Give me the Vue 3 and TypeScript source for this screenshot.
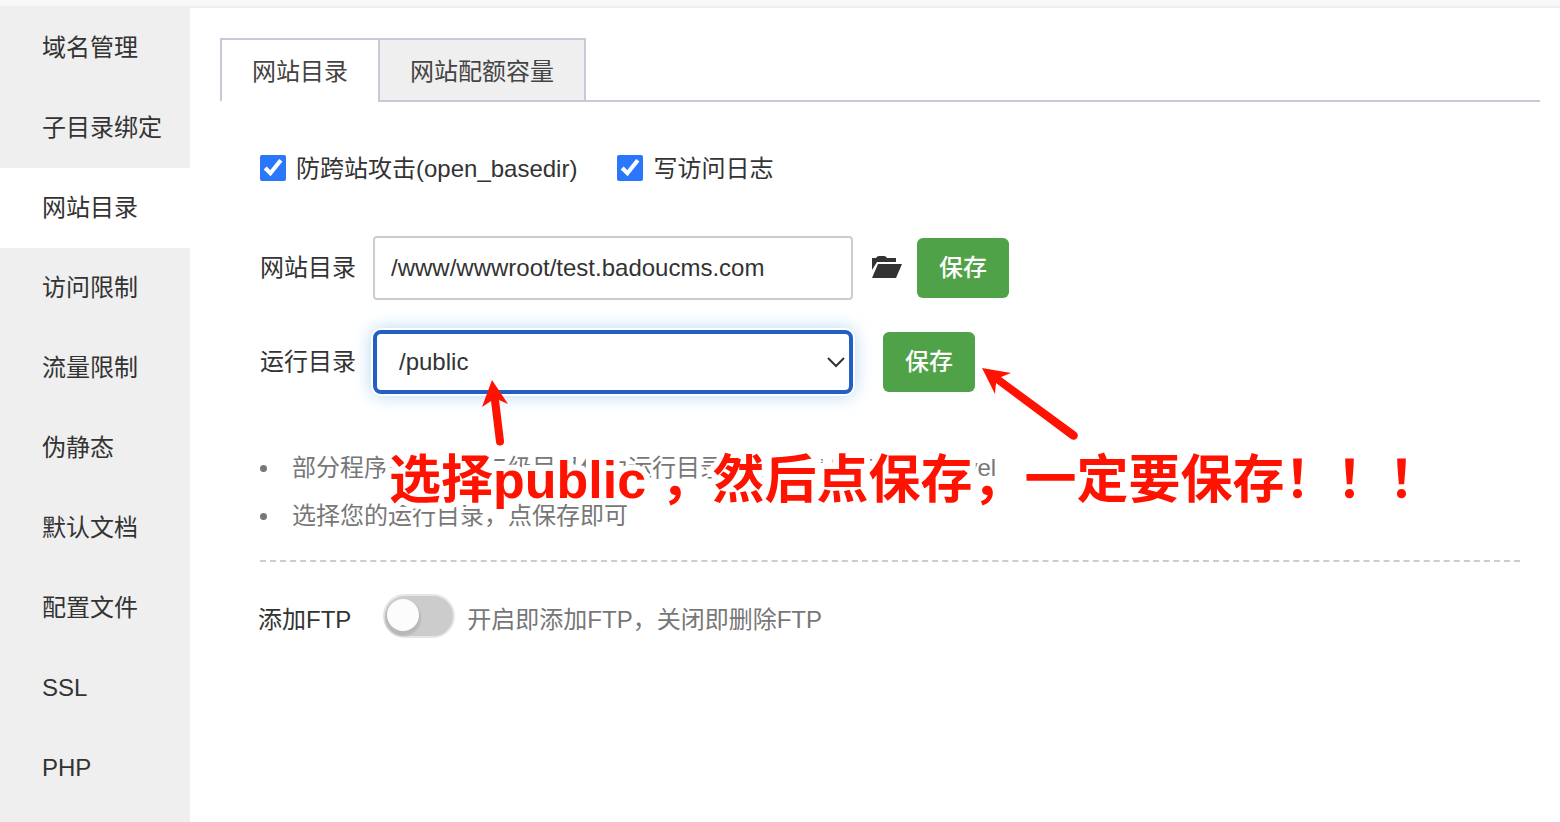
<script setup lang="ts">
import { ref } from 'vue'

const menu = ['域名管理', '子目录绑定', '网站目录', '访问限制', '流量限制', '伪静态', '默认文档', '配置文件', 'SSL', 'PHP']
const activeMenu = ref('网站目录')
const tabs = ['网站目录', '网站配额容量']
const activeTab = ref('网站目录')
const antiCross = ref(true)
const accessLog = ref(true)
const sitePath = ref('/www/wwwroot/test.badoucms.com')
const runPath = ref('/public')
const ftp = ref(false)
</script>

<template>
  <div class="page">
    <header class="topbar"></header>
    <div class="body">
      <nav class="sidebar">
        <button
          v-for="item in menu"
          :key="item"
          type="button"
          class="menu-item"
          :class="{ active: item === activeMenu }"
          @click="activeMenu = item"
        >{{ item }}</button>
      </nav>

      <main class="main">
        <div class="tabs">
          <button
            v-for="tab in tabs"
            :key="tab"
            type="button"
            class="tab"
            :class="{ active: tab === activeTab }"
            @click="activeTab = tab"
          >{{ tab }}</button>
          <span class="tab-fill"></span>
        </div>

        <section class="panel">
          <div class="checks">
            <label class="check"><input v-model="antiCross" type="checkbox" /><span>防跨站攻击(open_basedir)</span></label>
            <label class="check"><input v-model="accessLog" type="checkbox" /><span>写访问日志</span></label>
          </div>

          <div class="row">
            <label class="row-label" for="site-path">网站目录</label>
            <input id="site-path" v-model="sitePath" class="field" type="text" />
            <button type="button" class="folder" aria-label="选择目录">
              <svg width="32" height="24" viewBox="0 0 32 24">
                <path d="M1 14V2H5Q6 0 8 0H13Q15 0 16 2H25V6H6L1 14Z" fill="#333" />
                <path d="M7 8H31L25 22H1Z" fill="#333" />
              </svg>
            </button>
            <button type="button" class="save">保存</button>
          </div>

          <div class="row">
            <label class="row-label" for="run-path">运行目录</label>
            <span class="select-wrap">
              <select id="run-path" v-model="runPath" class="field focused">
                <option>/public</option>
                <option>/</option>
              </select>
              <svg class="chevron" width="20" height="12" viewBox="0 0 20 12">
                <path d="M2 2L10 10L18 2" fill="none" stroke="#333" stroke-width="2" />
              </svg>
            </span>
            <button type="button" class="save save-run">保存</button>
          </div>

          <ul class="tips">
            <li>部分程序需要指定二级目录作为运行目录，如ThinkPHP5，Laravel</li>
            <li>选择您的运行目录，点保存即可</li>
          </ul>

          <div class="ftp">
            <label class="ftp-label" for="ftp">添加FTP</label>
            <input id="ftp" v-model="ftp" class="switch" type="checkbox" />
            <span class="ftp-note">开启即添加FTP，关闭即删除FTP</span>
          </div>

          <svg class="arrow arrow-select" width="50" height="70" viewBox="0 0 50 70">
            <path d="M22 0L38 24L29 20L34 61A4 4 0 0 1 26 62L21 21L12 27Z" fill="#ff1200" />
          </svg>
          <svg class="arrow arrow-save" width="100" height="76" viewBox="0 0 100 76">
            <path d="M2 2L31 7L21 11L96 66A4 4 0 0 1 91 73L16 17L15 28Z" fill="#ff1200" />
          </svg>
          <p class="note">选择public ，然后点保存，一定要保存！！！</p>
        </section>
      </main>
    </div>
  </div>
</template>

<style>
body {
  margin: 0;
  background: #fff;
}
</style>

<style scoped>
.page {
  display: flex;
  flex-direction: column;
  min-height: 100vh;
  box-sizing: border-box;
  font-family: "Liberation Sans", "Noto Sans CJK SC", sans-serif;
  font-size: 24px;
  line-height: 36px;
  color: #333;
}
button,
input,
select {
  font: inherit;
  color: inherit;
  margin: 0;
  padding: 0;
  border: 0;
  background: none;
  box-sizing: border-box;
}
.topbar {
  height: 8px;
  box-sizing: border-box;
  background: #f8f8f8;
  border-bottom: 2px solid #eee;
}
.body {
  display: flex;
  flex: 1;
}
.sidebar {
  flex: 0 0 190px;
  background: #efefef;
}
.menu-item {
  display: block;
  width: 100%;
  height: 80px;
  padding-left: 42px;
  text-align: left;
}
.menu-item.active {
  background: #fff;
}
.main {
  flex: 1;
  min-width: 0;
  padding: 30px 20px 0 30px;
}
.tabs {
  display: flex;
}
.tab {
  height: 64px;
  padding: 4px 30px 0;
  border: 2px solid #cac7d8;
  background: #efefef;
  color: #444;
}
.tab:first-child {
  border-right-width: 0;
}
.tab.active {
  background: #fff;
  border-bottom-color: #fff;
}
.tab-fill {
  flex: 1;
  border-bottom: 2px solid #cac7d8;
}
.panel {
  position: relative;
  padding: 46px 20px 0 40px;
}
.checks {
  display: flex;
  gap: 40px;
  margin-bottom: 48px;
}
.check {
  display: flex;
  align-items: center;
  height: 40px;
  gap: 10px;
}
.check span {
  padding-top: 2px;
}
.check input {
  width: 26px;
  height: 26px;
  border-radius: 4px;
  overflow: hidden;
  accent-color: #2b77fb;
}
.row {
  display: flex;
  align-items: center;
  height: 64px;
  margin-bottom: 30px;
}
.row-label {
  width: 113px;
}
.field {
  width: 480px;
  height: 64px;
  padding: 0 16px;
  border: 2px solid #ccc;
  border-radius: 4px;
  background: #fff;
}
.select-wrap {
  position: relative;
  display: flex;
}
.focused {
  appearance: none;
  padding: 0 22px;
  border: 4px solid #2460c4;
  border-radius: 8px;
  outline: none;
  box-shadow: 0 0 0 2px #fff, 0 0 18px 2px #b9d7f2;
}
.chevron {
  position: absolute;
  right: 7px;
  top: 26px;
  pointer-events: none;
}
.folder {
  display: flex;
  width: 32px;
  margin: 0 14px 0 18px;
}
.save {
  width: 92px;
  height: 60px;
  border-radius: 6px;
  background: #50a248;
  color: #fff;
  font-weight: 500;
}
.save-run {
  margin-left: 30px;
}
.tips {
  margin: 0;
  padding: 20px 0;
  border-bottom: 2px dashed #ccc;
  line-height: 48px;
  color: #777;
  list-style: none;
}
.tips li {
  display: flex;
  align-items: center;
  gap: 25px;
}
.tips li::before {
  content: "";
  flex: none;
  width: 7px;
  height: 7px;
  border-radius: 50%;
  background: #777;
}
.ftp {
  display: flex;
  align-items: center;
  margin: 32px 0 0 -2px;
}
.switch {
  appearance: none;
  width: 72px;
  height: 44px;
  border: 2px solid #e6e6e6;
  border-radius: 22px;
  background: #ccc;
  margin: 0 12px 0 32px;
}
.switch::before {
  content: "";
  display: block;
  width: 32px;
  height: 32px;
  margin: 3px 2px;
  border-radius: 50%;
  background: #fcfcfc;
  box-shadow: 0 3px 2px 2px #b8b8b8;
}
.switch:checked {
  background: #50a248;
}
.switch:checked::before {
  margin-left: 34px;
}
.ftp-label,
.ftp-note {
  padding-top: 8px;
}
.ftp-note {
  color: #777;
}
.arrow {
  position: absolute;
  pointer-events: none;
}
.arrow-select {
  left: 250px;
  top: 278px;
}
.arrow-save {
  left: 760px;
  top: 264px;
}
.note {
  position: absolute;
  left: 169px;
  top: 342px;
  margin: 0;
  font-size: 52px;
  line-height: 72px;
  font-weight: 700;
  white-space: nowrap;
  color: #ff1200;
  -webkit-text-stroke: 12px #fff;
  paint-order: stroke fill;
  pointer-events: none;
}
</style>
